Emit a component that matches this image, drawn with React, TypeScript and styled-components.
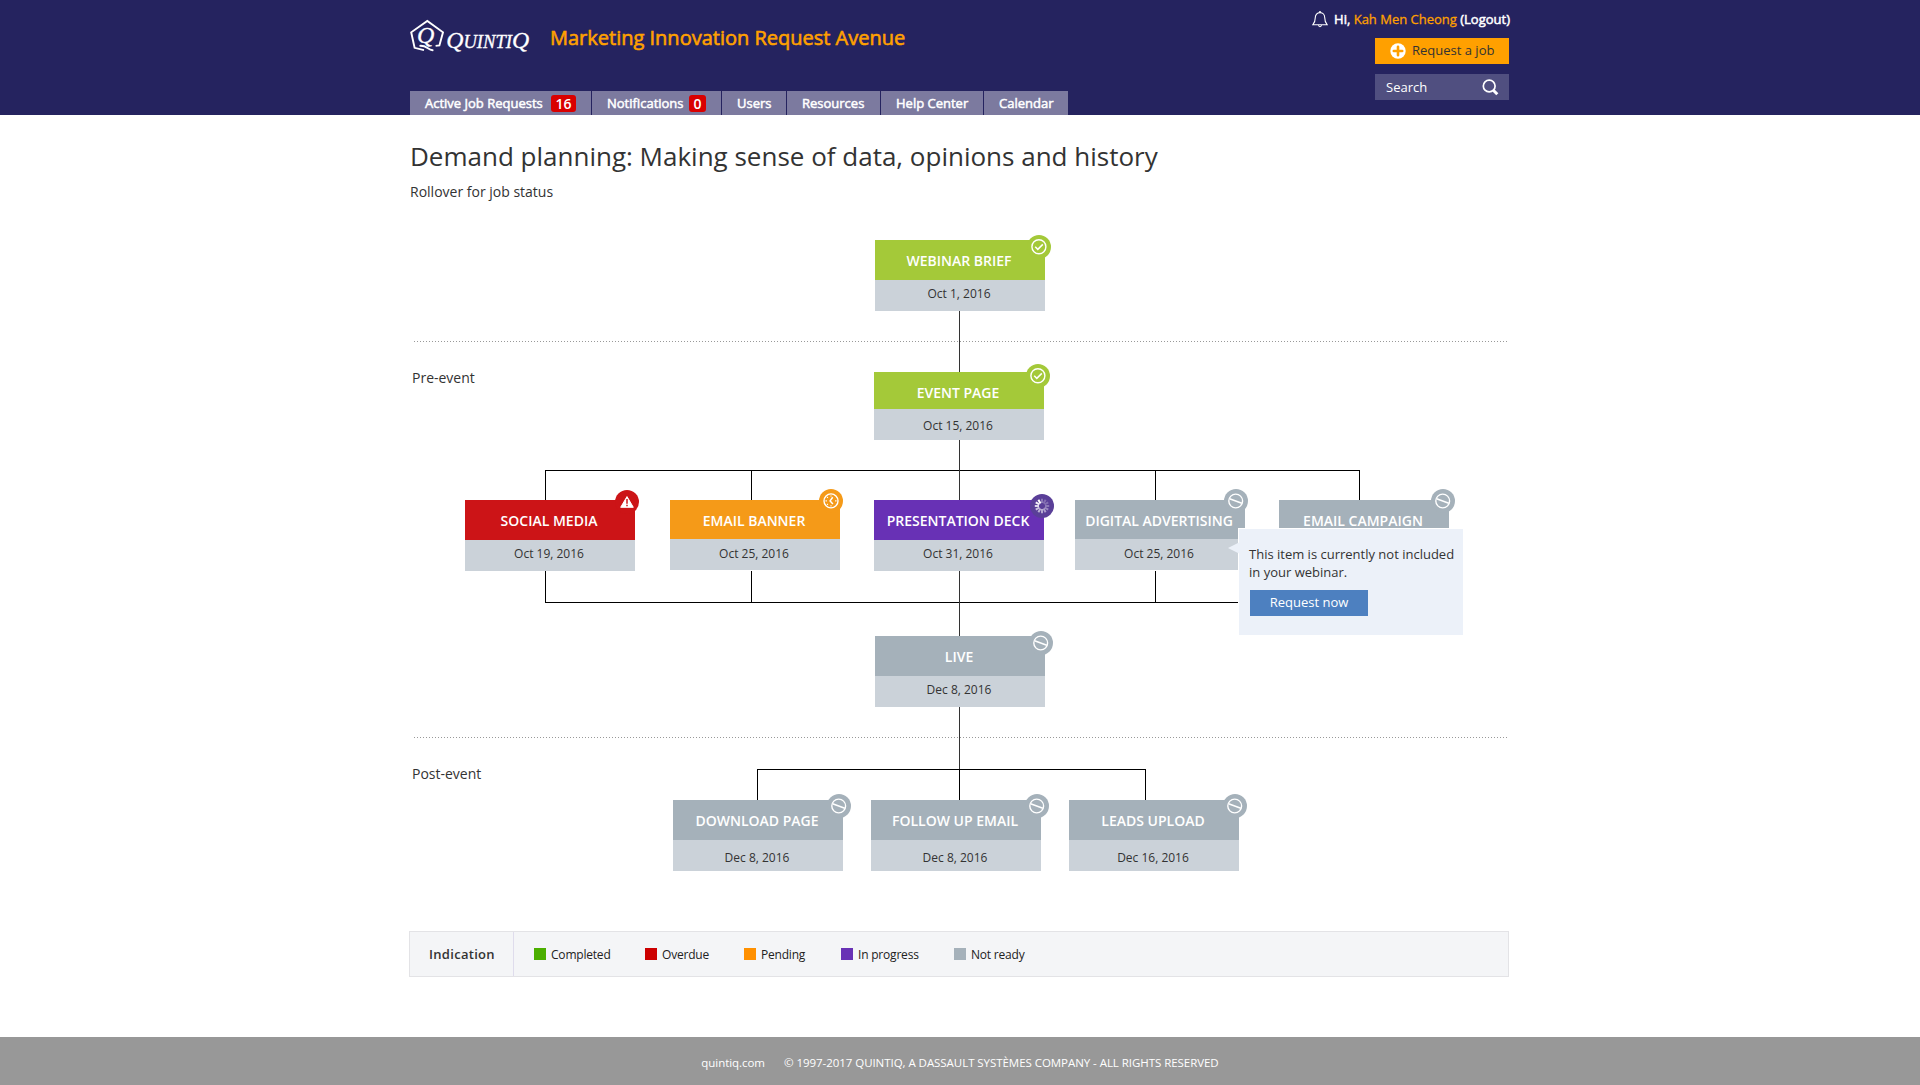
import React from "react";
import styled, { createGlobalStyle } from "styled-components";

const GlobalStyle = createGlobalStyle`
  * { box-sizing: border-box; }
  body {
    margin: 0;
    background: #fff;
    color: #333;
    font-family: "Open Sans", "Noto Sans", sans-serif;
  }
`;

const Page = styled.div`
  display: flex;
  flex-direction: column;
  min-height: 1085px;
`;

const Container = styled.div`
  width: 1100px;
  margin: 0 auto;
`;

const Header = styled.header`
  height: 115px;
  background: #25235f;
`;

const HeaderInner = styled(Container)`
  display: flex;
  justify-content: space-between;
  height: 115px;
`;

const HeaderLeft = styled.div`
  display: flex;
  flex-direction: column;
  justify-content: space-between;
`;

const Brand = styled.div`
  display: flex;
  align-items: flex-start;
  padding-top: 16px;
`;

const SiteTitle = styled.div`
  margin-left: 16px;
  padding-top: 7px;
  color: #ffa000;
  font-size: 20px;
  line-height: 30px;
  white-space: nowrap;
  -webkit-text-stroke: 0.6px #ffa000;
`;

const Nav = styled.nav`
  display: flex;
  gap: 1px;
  height: 24px;
`;

const NavItem = styled.a<{ $width: number }>`
  display: flex;
  align-items: center;
  width: ${(p) => p.$width}px;
  padding-left: 15px;
  background: #7c7a9f;
  color: #fff;
  font-size: 13px;
  white-space: nowrap;
  -webkit-text-stroke: 0.5px #fff;
`;

const Count = styled.span<{ $left: number; $width: number }>`
  position: absolute;
  left: ${(p) => p.$left}px;
  top: 4px;
  width: ${(p) => p.$width}px;
  height: 17px;
  border-radius: 3px;
  background: #d90000;
  font-size: 14px;
  font-weight: 600;
  line-height: 17px;
  text-align: center;
  -webkit-text-stroke: 0;
`;

const CountedNavItem = styled(NavItem)`
  position: relative;
`;

const HeaderRight = styled.div`
  display: flex;
  flex-direction: column;
  align-items: flex-end;
  padding-right: 1px;
`;

const UserLine = styled.div`
  display: flex;
  align-items: center;
  height: 38px;
  margin-right: -1px;
  color: #fff;
  font-size: 13px;
  white-space: pre;
  -webkit-text-stroke: 0.5px #fff;
  svg { margin-right: 6px; }
`;

const UserName = styled.span`
  color: #ffa000;
  -webkit-text-stroke: 0.3px #ffa000;
`;

const RequestJob = styled.button`
  display: flex;
  align-items: center;
  width: 134px;
  height: 26px;
  padding: 0 0 0 15px;
  border: 0;
  background: #ffa000;
  color: #333;
  font: 400 13px "Open Sans", sans-serif;
  white-space: nowrap;
  svg { margin-right: 6px; }
`;

const RequestLabel = styled.span`
  padding-bottom: 2px;
`;

const SearchBox = styled.div`
  display: flex;
  align-items: center;
  justify-content: space-between;
  width: 134px;
  height: 26px;
  margin-top: 10px;
  padding: 0 10px 0 11px;
  background: #504f80;
  color: #fff;
  font-size: 13px;
`;

const PageTitle = styled.h1`
  margin: 23px 0 0;
  font-size: 26px;
  font-weight: 400;
  line-height: 36px;
`;

const Hint = styled.p`
  margin: 8px 0 0;
  font-size: 14px;
  line-height: 20px;
`;

const Chart = styled.section`
  position: relative;
  height: 729px;
`;

const Rule = styled.div<{ $y: number }>`
  position: absolute;
  top: ${(p) => p.$y}px;
  left: 4px;
  width: 1094px;
  height: 1px;
  background: repeating-linear-gradient(90deg, #999 0 1px, transparent 1px 3px);
`;

const Phase = styled.h2<{ $y: number }>`
  position: absolute;
  top: ${(p) => p.$y}px;
  left: 2px;
  margin: 0;
  font-size: 14px;
  font-weight: 400;
  line-height: 20px;
`;

const Wires = styled.svg`
  position: absolute;
  top: 0;
  left: 0;
`;

const Node = styled.div<{ $x: number; $y: number }>`
  position: absolute;
  left: ${(p) => p.$x}px;
  top: ${(p) => p.$y}px;
  width: 170px;
`;

const NodeTitle = styled.div<{ $color: string; $height: number }>`
  height: ${(p) => p.$height}px;
  padding: 1px 2px 0 0;
  background: ${(p) => p.$color};
  color: #fff;
  font-size: 14px;
  font-weight: 600;
  line-height: 40px;
  text-align: center;
  white-space: nowrap;
`;

const NodeDate = styled.div<{ $shift: number }>`
  height: 31px;
  padding: ${(p) => p.$shift}px 2px 0 0;
  background: #cbd2d9;
  font-size: 12px;
  line-height: 20px;
  text-align: center;
`;

const Badge = styled.span<{ $x: number; $y: number; $color: string }>`
  position: absolute;
  left: ${(p) => p.$x - 12}px;
  top: ${(p) => p.$y - 12}px;
  width: 24px;
  height: 24px;
  border-radius: 50%;
  background: ${(p) => p.$color};
  svg { display: block; }
`;

const Tooltip = styled.div`
  position: absolute;
  left: 828px;
  top: 326px;
  width: 225px;
  height: 107px;
  padding: 16px 0 0 11px;
  border: 1px solid #fff;
  border-right: 0;
  border-bottom: 0;
  background: #ecf1f9;
`;

const TooltipArrow = styled.svg`
  position: absolute;
  left: -11px;
  top: 12px;
`;

const TooltipText = styled.p`
  margin: 0 0 9px -1px;
  font-size: 13px;
  line-height: 18px;
  white-space: nowrap;
`;

const RequestNow = styled.button`
  display: block;
  width: 118px;
  height: 26px;
  padding: 0 0 2px;
  border: 0;
  background: #4d80c0;
  color: #fff;
  font: 400 13px "Open Sans", sans-serif;
`;

const Legend = styled.div`
  display: flex;
  align-items: center;
  width: 1100px;
  height: 46px;
  margin-left: -1px;
  border: 1px solid #e3e3e6;
  background: #f4f5f7;
`;

const LegendTitle = styled.div`
  width: 104px;
  margin-right: 20px;
  padding-left: 19px;
  border-right: 1px solid #dfdcec;
  font-size: 13px;
  font-weight: 600;
  letter-spacing: 0.3px;
  line-height: 44px;
`;

const LegendItem = styled.div<{ $width: number }>`
  display: flex;
  align-items: center;
  width: ${(p) => p.$width}px;
  color: #222;
  font-size: 12px;
  letter-spacing: -0.2px;
`;

const Swatch = styled.span<{ $color: string }>`
  width: 12px;
  height: 12px;
  margin-right: 5px;
  background: ${(p) => p.$color};
`;

const Footer = styled.footer`
  display: flex;
  justify-content: center;
  gap: 19px;
  height: 48px;
  margin-top: auto;
  padding-top: 2px;
  background: #989898;
  color: #fff;
  font-size: 11.5px;
  letter-spacing: -0.05px;
  line-height: 48px;
`;

type Status = "done" | "overdue" | "pending" | "progress" | "idle";

const STATUS_COLOR: Record<Status, string> = {
  done: "#a4c939",
  overdue: "#cc1417",
  pending: "#f59a18",
  progress: "#6831b5",
  idle: "#a5b1ba",
};

interface Job {
  title: string;
  date?: string;
  status: Status;
  x: number;
  y: number;
  badge: [number, number];
  head?: number;
  dateShift?: number;
}

const JOBS: Job[] = [
  { title: "WEBINAR BRIEF", date: "Oct 1, 2016", status: "done", x: 465, y: 38, badge: [164, 7] },
  { title: "EVENT PAGE", date: "Oct 15, 2016", status: "done", x: 464, y: 170, badge: [164, 4], head: 37, dateShift: 7 },
  { title: "SOCIAL MEDIA", date: "Oct 19, 2016", status: "overdue", x: 55, y: 298, badge: [162, 2] },
  { title: "EMAIL BANNER", date: "Oct 25, 2016", status: "pending", x: 260, y: 298, badge: [161, 1], head: 39, dateShift: 5 },
  { title: "PRESENTATION DECK", date: "Oct 31, 2016", status: "progress", x: 464, y: 298, badge: [168, 6] },
  { title: "DIGITAL ADVERTISING", date: "Oct 25, 2016", status: "idle", x: 665, y: 298, badge: [161, 1], head: 39, dateShift: 5 },
  { title: "EMAIL CAMPAIGN", status: "idle", x: 869, y: 298, badge: [164, 1], head: 39 },
  { title: "LIVE", date: "Dec 8, 2016", status: "idle", x: 465, y: 434, badge: [166, 7] },
  { title: "DOWNLOAD PAGE", date: "Dec 8, 2016", status: "idle", x: 263, y: 598, badge: [166, 6], dateShift: 8 },
  { title: "FOLLOW UP EMAIL", date: "Dec 8, 2016", status: "idle", x: 461, y: 598, badge: [166, 6], dateShift: 8 },
  { title: "LEADS UPLOAD", date: "Dec 16, 2016", status: "idle", x: 659, y: 598, badge: [166, 6], dateShift: 8 },
];

const LEGEND = [
  { label: "Completed", color: "#4caf00", width: 111 },
  { label: "Overdue", color: "#cc0000", width: 99 },
  { label: "Pending", color: "#ff9000", width: 97 },
  { label: "In progress", color: "#6831b5", width: 113 },
  { label: "Not ready", color: "#a5b1ba", width: 90 },
];

function StatusIcon({ status }: { status: Status }) {
  return (
    <svg width="24" height="24" viewBox="0 0 24 24" fill="none" stroke="#fff">
      {status === "done" && (
        <>
          <circle cx="11.9" cy="11.7" r="7" strokeWidth="1.4" />
          <path d="M8.2 11.8l2.6 2.6 5-5" strokeWidth="1.5" />
        </>
      )}
      {status === "overdue" && (
        <>
          <path d="M12 6.6L18.3 17.3H5.7z" fill="#fff" strokeWidth="1" strokeLinejoin="round" />
          <path d="M12 9v4.8M12 14.8v1.4" stroke="#cc1417" strokeWidth="1.5" />
        </>
      )}
      {status === "pending" && (
        <>
          <circle cx="12" cy="11.9" r="7" strokeWidth="1.4" />
          <path d="M13.7 8.2l-2.6 3.7 2.8 3" strokeWidth="1.5" />
          <path d="M12 6.4v1.2M12 16.2v1.2M6.5 11.9h1.4M16.1 11.9h1.4M8.1 8l.8.8M8.1 15.8l.8-.8" strokeWidth="1.1" />
        </>
      )}
      {status === "progress" &&
        Array.from({ length: 12 }, (_, i) => (
          <path
            key={i}
            d="M12 4.8v4.2"
            strokeWidth="2"
            opacity={[0.3, 0.25, 0.25, 0.3, 0.4, 0.5, 0.55, 0.6, 0.7, 0.8, 0.95, 1][i]}
            transform={`rotate(${i * 30} 12 12)`}
          />
        ))}
      {status === "idle" && (
        <>
          <circle cx="11.7" cy="12" r="6.9" strokeWidth="1.4" />
          <path d="M5.6 9.8l12.2 4.5" strokeWidth="1.5" />
        </>
      )}
    </svg>
  );
}

function Logo() {
  return (
    <svg width="124" height="40" viewBox="0 0 124 40" fill="none">
      <path
        d="M25.6 29.9L29.4 29.4L33 16.3L17.3 5L1.2 16.3L4.6 31.8L14 34.2"
        stroke="#fff"
        strokeWidth="1.9"
      />
      <path d="M9.5 29.8Q14 29.4 17.5 32T23.4 34.2" stroke="#fff" strokeWidth="1.8" />
      <text x="7" y="27.4" fill="#fff" stroke="#fff" strokeWidth="0.3" fontFamily="Liberation Serif, serif" fontStyle="italic" fontSize="24">
        Q
      </text>
      <text x="36.2" y="31.8" fill="#fff" stroke="#fff" strokeWidth="0.3" fontFamily="Liberation Serif, serif" fontStyle="italic" fontSize="23" textLength="83" lengthAdjust="spacingAndGlyphs">
        Q<tspan fontSize="18">UINTI</tspan>Q
      </text>
    </svg>
  );
}

const BellIcon = () => (
  <svg width="16" height="17" viewBox="0 0 16 17" fill="none" stroke="#fff" strokeWidth="1.1">
    <path d="M8 1.6C5 1.6 3.3 3.8 3.3 6.6C3.3 10.5 2.6 11.7.9 13.7H15.1C13.4 11.7 12.7 10.5 12.7 6.6C12.7 3.8 11 1.6 8 1.6z" />
    <path d="M7.2 1.5Q8-.2 8.8 1.5M6.4 14.2Q8 17.2 9.6 14.2" />
  </svg>
);

const PlusIcon = () => (
  <svg width="16" height="16" viewBox="0 0 16 16">
    <circle cx="8" cy="8" r="7.7" fill="#fff" />
    <path d="M8 3.8v8.4M3.8 8h8.4" stroke="#ffa000" strokeWidth="2.6" strokeLinecap="round" />
  </svg>
);

const SearchIcon = () => (
  <svg width="17" height="17" viewBox="0 0 17 17" fill="none" stroke="#fff">
    <circle cx="7.2" cy="7" r="5.9" strokeWidth="1.7" />
    <path d="M11.3 11.2L15.3 15.2" strokeWidth="3" />
  </svg>
);

export default function App() {
  return (
    <Page>
      <GlobalStyle />
      <Header>
        <HeaderInner>
          <HeaderLeft>
            <Brand>
              <Logo />
              <SiteTitle>Marketing Innovation Request Avenue</SiteTitle>
            </Brand>
            <Nav>
              <CountedNavItem $width={181}>
                Active Job Requests
                <Count $left={141} $width={25}>16</Count>
              </CountedNavItem>
              <CountedNavItem $width={129}>
                Notifications
                <Count $left={97} $width={17}>0</Count>
              </CountedNavItem>
              <NavItem $width={64}>Users</NavItem>
              <NavItem $width={93}>Resources</NavItem>
              <NavItem $width={102}>Help Center</NavItem>
              <NavItem $width={84}>Calendar</NavItem>
            </Nav>
          </HeaderLeft>
          <HeaderRight>
            <UserLine>
              <BellIcon />
              Hi, <UserName>Kah Men Cheong</UserName> (Logout)
            </UserLine>
            <RequestJob>
              <PlusIcon />
              <RequestLabel>Request a job</RequestLabel>
            </RequestJob>
            <SearchBox>
              Search
              <SearchIcon />
            </SearchBox>
          </HeaderRight>
        </HeaderInner>
      </Header>
      <Container>
        <PageTitle>Demand planning: Making sense of data, opinions and history</PageTitle>
        <Hint>Rollover for job status</Hint>
        <Chart>
          <Rule $y={139} />
          <Rule $y={535} />
          <Phase $y={166}>Pre-event</Phase>
          <Phase $y={562}>Post-event</Phase>
          <Wires width="1100" height="729" fill="none" shapeRendering="crispEdges">
            <path
              stroke="#000"
              d="M135.5 298V268.5H949.5V298M341.5 268V298M745.5 268V298M135.5 369V400.5H949.5V369M341.5 369V400M745.5 369V400M347.5 598V567.5H735.5V598M549.5 567V598"
            />
            <path stroke="#333" d="M549.5 109V170M549.5 238V298M549.5 369V434M549.5 505V567" />
          </Wires>
          {JOBS.map((job) => (
            <Node key={job.title} $x={job.x} $y={job.y}>
              <NodeTitle $color={STATUS_COLOR[job.status]} $height={job.head ?? 40}>
                {job.title}
              </NodeTitle>
              <NodeDate $shift={job.dateShift ?? 4}>{job.date}</NodeDate>
              <Badge
                $x={job.badge[0]}
                $y={job.badge[1]}
                $color={job.status === "progress" ? "#5a3f98" : STATUS_COLOR[job.status]}
              >
                <StatusIcon status={job.status} />
              </Badge>
            </Node>
          ))}
          <Tooltip>
            <TooltipArrow width="12" height="14" viewBox="0 0 12 14">
              <path d="M12 1L0 7L12 13" fill="#ecf1f9" />
            </TooltipArrow>
            <TooltipText>
              This item is currently not included
              <br />
              in your webinar.
            </TooltipText>
            <RequestNow>Request now</RequestNow>
          </Tooltip>
        </Chart>
        <Legend>
          <LegendTitle>Indication</LegendTitle>
          {LEGEND.map((item) => (
            <LegendItem key={item.label} $width={item.width}>
              <Swatch $color={item.color} />
              {item.label}
            </LegendItem>
          ))}
        </Legend>
      </Container>
      <Footer>
        <span>quintiq.com</span>
        <span>© 1997-2017 QUINTIQ, A DASSAULT SYSTÈMES COMPANY - ALL RIGHTS RESERVED</span>
      </Footer>
    </Page>
  );
}
